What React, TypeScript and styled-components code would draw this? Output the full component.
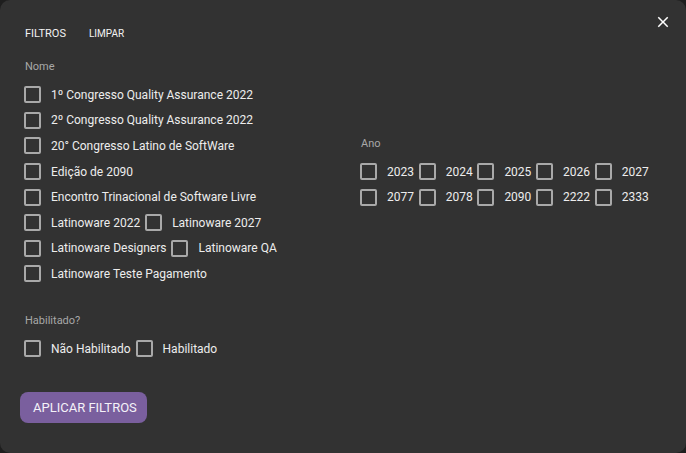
import React, { useState } from 'react';
import styled, { createGlobalStyle } from 'styled-components';

const GlobalStyle = createGlobalStyle`
  html, body {
    margin: 0;
    padding: 0;
    background: #1e1e1e;
    font-family: Roboto, "Liberation Sans", sans-serif;
  }
`;

const Dialog = styled.div`
  position: relative;
  width: 686px;
  height: 453px;
  box-sizing: border-box;
  background: #323232;
  border-radius: 10px;
  padding: 24px 24px 0 24px;
  color: #ececec;
  display: flex;
  flex-direction: column;
`;

const CloseButton = styled.button`
  position: absolute;
  top: 13px;
  right: 14px;
  width: 18px;
  height: 18px;
  padding: 0;
  border: none;
  background: none;
  cursor: pointer;
  svg {
    display: block;
  }
`;

const Header = styled.div`
  display: flex;
  align-items: center;
  gap: 22px;
  height: 18px;
  margin-left: 1px;
`;

const Tab = styled.span<{ $small?: boolean }>`
  font-size: ${(p) => (p.$small ? '10px' : '11px')};
  font-weight: 400;
  margin-left: ${(p) => (p.$small ? '1px' : '0')};
  text-transform: uppercase;
  color: #f2f2f2;
`;

const Columns = styled.div`
  display: flex;
  align-items: center;
  margin-top: 18px;
`;

const Column = styled.div<{ $width?: number }>`
  width: ${(p) => (p.$width ? `${p.$width}px` : 'auto')};
  flex: ${(p) => (p.$width ? 'none' : 1)};
`;

const Label = styled.div`
  font-size: 11px;
  color: #a8a8a8;
  margin-left: 1px;
  height: 14px;
  line-height: 14px;
  margin-bottom: 8px;
`;

const Group = styled.div`
  display: flex;
  flex-direction: column;
`;

const Row = styled.div`
  display: flex;
  align-items: center;
  height: 25.6px;
`;

const Item = styled.label<{ $width?: number }>`
  display: flex;
  align-items: center;
  width: ${(p) => (p.$width ? `${p.$width}px` : 'auto')};
  margin-right: ${(p) => (p.$width ? '3px' : '5px')};
  cursor: pointer;
  font-size: 12px;
  color: #ededed;
  white-space: nowrap;
`;

const Box = styled.span<{ $checked: boolean }>`
  width: 13px;
  height: 13px;
  border: 2px solid #a9a9a9;
  border-radius: 2px;
  margin-right: 10px;
  flex: none;
  background: ${(p) => (p.$checked ? '#7b5fa0' : 'transparent')};
`;

const Section = styled.div`
  margin-top: 27px;
`;

const ApplyButton = styled.button`
  align-self: flex-start;
  margin-top: 31px;
  margin-left: -4px;
  height: 31px;
  padding: 0 10px 0 13px;
  border: none;
  border-radius: 8px;
  background: #7a5f9e;
  color: #f4f2f8;
  font-family: Roboto, "Liberation Sans", sans-serif;
  font-size: 13px;
  text-transform: uppercase;
  cursor: pointer;
`;

function Check({ text, width }: { text: string; width?: number }) {
  const [checked, setChecked] = useState(false);
  return (
    <Item $width={width} onClick={() => setChecked(!checked)}>
      <Box $checked={checked} />
      {text}
    </Item>
  );
}

const nomes: string[][] = [
  ['1º Congresso Quality Assurance 2022'],
  ['2º Congresso Quality Assurance 2022'],
  ['20° Congresso Latino de SoftWare'],
  ['Edição de 2090'],
  ['Encontro Trinacional de Software Livre'],
  ['Latinoware 2022', 'Latinoware 2027'],
  ['Latinoware Designers', 'Latinoware QA'],
  ['Latinoware Teste Pagamento'],
];

const anos: string[][] = [
  ['2023', '2024', '2025', '2026', '2027'],
  ['2077', '2078', '2090', '2222', '2333'],
];

export default function App() {
  return (
    <>
      <GlobalStyle />
      <Dialog>
        <CloseButton aria-label="Fechar">
          <svg width="18" height="18" viewBox="0 0 24 24">
            <path
              d="M19 6.41 17.59 5 12 10.59 6.41 5 5 6.41 10.59 12 5 17.59 6.41 19 12 13.41 17.59 19 19 17.59 13.41 12z"
              fill="#ffffff"
            />
          </svg>
        </CloseButton>
        <Header>
          <Tab>Filtros</Tab>
          <Tab $small>Limpar</Tab>
        </Header>
        <Columns>
          <Column $width={336}>
            <Label>Nome</Label>
            <Group>
              {nomes.map((row) => (
                <Row key={row[0]}>
                  {row.map((n) => (
                    <Check key={n} text={n} />
                  ))}
                </Row>
              ))}
            </Group>
          </Column>
          <Column>
            <Label>Ano</Label>
            <Group>
              {anos.map((row) => (
                <Row key={row[0]}>
                  {row.map((a) => (
                    <Check key={a} text={a} width={55.7} />
                  ))}
                </Row>
              ))}
            </Group>
          </Column>
        </Columns>
        <Section>
          <Label>Habilitado?</Label>
          <Row>
            <Check text="Não Habilitado" />
            <Check text="Habilitado" />
          </Row>
        </Section>
        <ApplyButton>Aplicar filtros</ApplyButton>
      </Dialog>
    </>
  );
}
